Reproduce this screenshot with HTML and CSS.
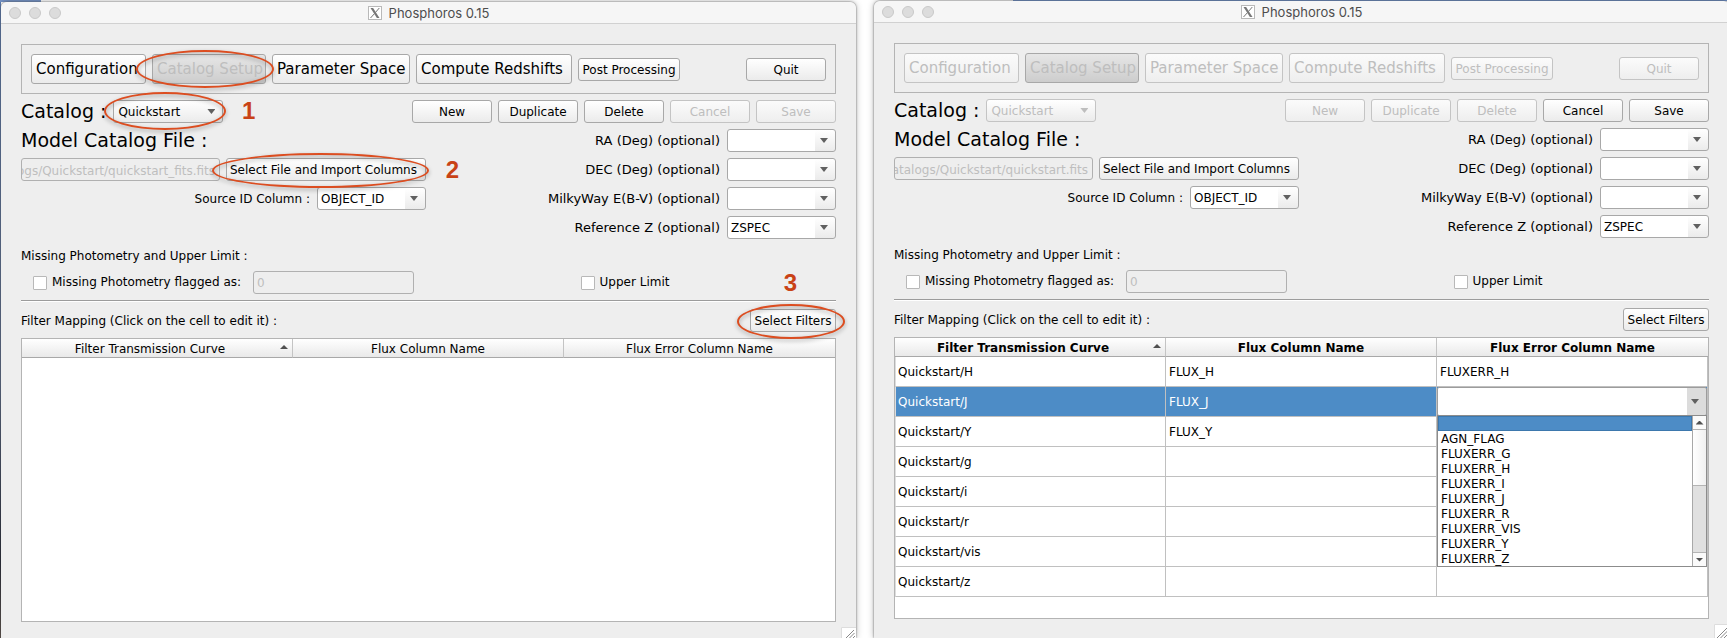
FILE: index.html
```html
<!DOCTYPE html>
<html lang="en">
<head>
<meta charset="utf-8">
<title>Phosphoros 0.15</title>
<link rel="stylesheet" href="styles.css">
</head>
<body>
<main class="desktop">

<section class="window window-main">
  <header class="titlebar">
    <div class="lights"><i></i><i></i><i></i></div>
    <h1 class="title">
      <svg class="xicon" viewBox="0 0 14 14" aria-hidden="true"><rect x=".5" y=".5" width="13" height="13" fill="#fff" stroke="#b9b9b9"/><path d="M2.5 2h2.6l6.4 10H8.9z" fill="#777"/><path d="M11.3 2L7.5 6.4M6.3 7.8L2.5 12" stroke="#777" stroke-width="1"/></svg>
      Phosphoros 0.15
    </h1>
    <span></span>
  </header>
  <div class="content">
    <nav class="toolbar">
      <button class="btn big w-conf">Configuration</button>
      <span class="marked"><button class="btn big pressed w-cat" disabled>Catalog Setup</button><span class="ring ring-setup"></span></span>
      <button class="btn big w-par">Parameter Space</button>
      <button class="btn big w-comp">Compute Redshifts</button>
      <button class="btn w-post">Post Processing</button>
      <button class="btn push">Quit</button>
    </nav>
    <div class="row">
      <label class="heading" for="cat-a">Catalog :</label>
      <span class="marked combo flat w-sel"><select id="cat-a"><option>Quickstart</option></select><span class="ring ring-catalog"></span><b class="num num-1">1</b></span>
      <button class="btn push">New</button>
      <button class="btn">Duplicate</button>
      <button class="btn">Delete</button>
      <button class="btn" disabled>Cancel</button>
      <button class="btn" disabled>Save</button>
    </div>
    <div class="form">
      <div class="source">
        <label class="heading" for="file-a">Model Catalog File :</label>
        <div class="row">
          <input class="field path" id="file-a" value="Catalogs/Quickstart/quickstart_fits.fits" disabled>
          <span class="marked"><button class="btn w-import">Select File and Import Columns</button><span class="ring ring-import"></span><b class="num num-2">2</b></span>
        </div>
        <div class="row end"><label for="sid-a">Source ID Column :</label><span class="combo"><select id="sid-a"><option>OBJECT_ID</option></select></span></div>
      </div>
      <div class="optional">
        <label for="ra-a">RA (Deg) (optional)</label><span class="combo"><select id="ra-a"><option></option></select></span>
        <label for="dec-a">DEC (Deg) (optional)</label><span class="combo"><select id="dec-a"><option></option></select></span>
        <label for="mw-a">MilkyWay E(B-V) (optional)</label><span class="combo"><select id="mw-a"><option></option></select></span>
        <label for="z-a">Reference Z (optional)</label><span class="combo"><select id="z-a"><option>ZSPEC</option></select></span>
      </div>
    </div>
    <p class="caption">Missing Photometry and Upper Limit :</p>
    <div class="limits">
      <div class="flagged"><label class="check"><input type="checkbox">Missing Photometry flagged as:</label><input class="field flag" aria-label="Missing photometry flag" value="0" disabled></div>
      <label class="check"><input type="checkbox">Upper Limit</label>
    </div>
    <hr>
    <div class="mapping">
      <span>Filter Mapping (Click on the cell to edit it) :</span>
      <span class="marked"><button class="btn w-filt">Select Filters</button><span class="ring ring-filters"></span><b class="num num-3">3</b></span>
    </div>
    <div class="tablebox">
      <table class="plain">
        <thead><tr><th class="sorted">Filter Transmission Curve</th><th>Flux Column Name</th><th>Flux Error Column Name</th></tr></thead>
      </table>
    </div>
  </div>
  <svg class="grip" viewBox="0 0 15 11" aria-hidden="true"><path d="M0 11V.5H15V11z" fill="#fff"/><path d="M.5 11V.5H15" fill="none" stroke="#ddd"/><path d="M5 11l8-8M8.500 11l5-5M12 11l2-2" stroke="#888" fill="none"/></svg>
</section>

<section class="window window-edit">
  <header class="titlebar">
    <div class="lights"><i></i><i></i><i></i></div>
    <h1 class="title">
      <svg class="xicon" viewBox="0 0 14 14" aria-hidden="true"><rect x=".5" y=".5" width="13" height="13" fill="#fff" stroke="#b9b9b9"/><path d="M2.5 2h2.6l6.4 10H8.9z" fill="#777"/><path d="M11.3 2L7.5 6.4M6.3 7.8L2.5 12" stroke="#777" stroke-width="1"/></svg>
      Phosphoros 0.15
    </h1>
    <span></span>
  </header>
  <div class="content">
    <nav class="toolbar">
      <button class="btn big w-conf" disabled>Configuration</button>
      <button class="btn big pressed w-cat" disabled>Catalog Setup</button>
      <button class="btn big w-par" disabled>Parameter Space</button>
      <button class="btn big w-comp" disabled>Compute Redshifts</button>
      <button class="btn w-post" disabled>Post Processing</button>
      <button class="btn push" disabled>Quit</button>
    </nav>
    <div class="row">
      <label class="heading" for="cat-b">Catalog :</label>
      <span class="combo flat off w-sel"><select id="cat-b" disabled><option>Quickstart</option></select></span>
      <button class="btn push" disabled>New</button>
      <button class="btn" disabled>Duplicate</button>
      <button class="btn" disabled>Delete</button>
      <button class="btn">Cancel</button>
      <button class="btn">Save</button>
    </div>
    <div class="form">
      <div class="source">
        <label class="heading" for="file-b">Model Catalog File :</label>
        <div class="row">
          <input class="field path" id="file-b" value="Catalogs/Quickstart/quickstart.fits" disabled>
          <button class="btn w-import">Select File and Import Columns</button>
        </div>
        <div class="row end"><label for="sid-b">Source ID Column :</label><span class="combo"><select id="sid-b"><option>OBJECT_ID</option></select></span></div>
      </div>
      <div class="optional">
        <label for="ra-b">RA (Deg) (optional)</label><span class="combo"><select id="ra-b"><option></option></select></span>
        <label for="dec-b">DEC (Deg) (optional)</label><span class="combo"><select id="dec-b"><option></option></select></span>
        <label for="mw-b">MilkyWay E(B-V) (optional)</label><span class="combo"><select id="mw-b"><option></option></select></span>
        <label for="z-b">Reference Z (optional)</label><span class="combo"><select id="z-b"><option>ZSPEC</option></select></span>
      </div>
    </div>
    <p class="caption">Missing Photometry and Upper Limit :</p>
    <div class="limits">
      <div class="flagged"><label class="check"><input type="checkbox">Missing Photometry flagged as:</label><input class="field flag" aria-label="Missing photometry flag" value="0" disabled></div>
      <label class="check"><input type="checkbox">Upper Limit</label>
    </div>
    <hr>
    <div class="mapping">
      <span>Filter Mapping (Click on the cell to edit it) :</span>
      <button class="btn w-filt">Select Filters</button>
    </div>
    <div class="tablebox">
      <table>
        <thead><tr><th class="sorted">Filter Transmission Curve</th><th>Flux Column Name</th><th>Flux Error Column Name</th></tr></thead>
        <tbody>
          <tr><td>Quickstart/H</td><td>FLUX_H</td><td>FLUXERR_H</td></tr>
          <tr class="selected"><td>Quickstart/J</td><td>FLUX_J</td><td class="editor">
            <div class="cellcombo">
              <select aria-label="Flux error column"><option></option></select>
              <div class="popup">
                <ul role="listbox" aria-label="Flux error columns">
                  <li role="option" aria-selected="true"></li>
                  <li role="option">AGN_FLAG</li>
                  <li role="option">FLUXERR_G</li>
                  <li role="option">FLUXERR_H</li>
                  <li role="option">FLUXERR_I</li>
                  <li role="option">FLUXERR_J</li>
                  <li role="option">FLUXERR_R</li>
                  <li role="option">FLUXERR_VIS</li>
                  <li role="option">FLUXERR_Y</li>
                  <li role="option">FLUXERR_Z</li>
                </ul>
                <div class="scroll"><span class="step up"></span><span class="thumb"></span><span class="step down"></span></div>
              </div>
            </div>
          </td></tr>
          <tr><td>Quickstart/Y</td><td>FLUX_Y</td><td></td></tr>
          <tr><td>Quickstart/g</td><td></td><td></td></tr>
          <tr><td>Quickstart/i</td><td></td><td></td></tr>
          <tr><td>Quickstart/r</td><td></td><td></td></tr>
          <tr><td>Quickstart/vis</td><td></td><td></td></tr>
          <tr><td>Quickstart/z</td><td></td><td></td></tr>
        </tbody>
      </table>
    </div>
  </div>
  <svg class="grip" viewBox="0 0 15 14" aria-hidden="true"><path d="M0 14V.5H15V14z" fill="#fff"/><path d="M.5 14V.5H15" fill="none" stroke="#ddd"/><path d="M3 14L13 4M6.500 14l7-7M10 14l4-4" stroke="#888" fill="none"/></svg>
</section>

</main>
</body>
</html>
```
FILE: styles.css
```css
* { box-sizing: border-box; }

html { overflow: hidden; }

body {
  margin: 0;
  font: 12px/15px "DejaVu Sans", sans-serif;
  color: #000;
  background: #fff;
}

.desktop {
  display: grid;
  grid-template-columns: 1fr 1fr;
  gap: 18px;
  min-height: 100vh;
  margin-right: -2px;
  padding-left: 1px;
  background:
    linear-gradient(#7593c6, #7593c6) 0 0 / 41px 2px no-repeat,
    linear-gradient(#6c8fca, #6c8fca) 1013px 0 / 100% 1px no-repeat,
    linear-gradient(#5b7db5, #5a6b8c 60%, #1c2030 88%, #5b5048) 0 0 / 1px 100% no-repeat,
    #fff;
}

.window {
  position: relative;
  display: flex;
  flex-direction: column;
  background: #eee;
  border-radius: 6px 6px 0 0;
  box-shadow: 0 0 2px #555, 0 0 7px rgba(0, 0, 0, .28);
}
.window-main { margin-top: 2px; }
.window-edit { margin-top: 1px; }

.titlebar {
  display: grid;
  grid-template-columns: 1fr auto 1fr;
  align-items: center;
  height: 22px;
  background: #f6f6f6;
  border-bottom: 1px solid #d1d1d1;
  border-radius: 6px 6px 0 0;
}
.lights { display: flex; gap: 8px; padding-left: 8px; }
.lights i {
  width: 12px;
  height: 12px;
  border: 1px solid #c9c9c9;
  border-radius: 50%;
  background: #dcdcdc;
}
.title {
  display: flex;
  align-items: center;
  gap: 7px;
  margin: 0;
  font: 13px/16px Inter, sans-serif;
  color: #4d4d4d;
}
.xicon { width: 14px; height: 14px; }

.content {
  display: flex;
  flex: 1;
  flex-direction: column;
  padding: 20px 20px 16px;
}
.window-edit .content { padding-bottom: 19px; }

.toolbar {
  display: flex;
  align-items: center;
  gap: 6px;
  margin-bottom: 6px;
  padding: 9px;
  border: 1px solid #b4b4b4;
}

.btn {
  width: 80px;
  height: 23px;
  padding: 2px 0 0;
  border: 1px solid #a8a8a8;
  border-radius: 3px;
  background: linear-gradient(#fff, #ebebeb);
  color: #000;
  font: inherit;
  white-space: nowrap;
}
.btn:disabled { color: #bebebe; border-color: #c4c4c4; background: linear-gradient(#fbfbfb, #eee); }
.btn.big { height: 30px; padding: 0 0 0 4px; font-size: 15px; text-align: left; }
.btn.pressed { border-color: #a8a8a8; background: linear-gradient(#e6e6e6, #cdcdcd); }
.w-conf { width: 115px; }
.w-cat { width: 114px; }
.w-par { width: 138px; }
.w-comp { width: 156px; }
.btn.w-post { width: 102px; }
.btn.w-import { width: 200px; padding-left: 3px; text-align: left; }
.btn.w-filt { width: 86px; }
.push { margin-left: auto; }

.row { display: flex; align-items: center; gap: 6px; height: 23px; }
.row.end { justify-content: flex-end; }
.row.end label { margin-right: 1px; padding-top: 2px; }
.heading { font-size: 19px; line-height: 23px; white-space: nowrap; }
.row .heading { margin-right: 1px; }

.combo { position: relative; width: 109px; height: 23px; }
.combo.w-sel { width: 110px; }
.combo select, .cellcombo select {
  appearance: none;
  width: 100%;
  height: 100%;
  padding: 2px 24px 0 3px;
  border: 1px solid #a8a8a8;
  border-radius: 3px;
  background: linear-gradient(#fff, #ebebeb) right / 20px 100% no-repeat, #fff;
  color: #000;
  font: inherit;
  opacity: 1;
}
.combo.flat select { padding-left: 4px; background: linear-gradient(#fff, #ebebeb); }
.combo.off select { color: #bebebe; border-color: #c4c4c4; }
.combo::after, .cellcombo::after {
  content: "";
  position: absolute;
  top: 9px;
  right: 8px;
  width: 8px;
  height: 5px;
  background: #606060;
  clip-path: polygon(0 0, 100% 0, 50% 100%);
  pointer-events: none;
}
.combo.off::after { background: #bebebe; }

.form { display: flex; justify-content: space-between; margin-top: 6px; }
.source { display: flex; flex-direction: column; gap: 6px; width: 405px; }
.optional {
  display: grid;
  grid-template-columns: auto 109px;
  gap: 6px 7px;
  align-items: center;
  text-align: right;
}
.optional label { font-size: 13px; }

.field {
  height: 23px;
  border: 1px solid #b0b0b0;
  border-radius: 3px;
  background: #eee;
  color: #bebebe;
  font: inherit;
}
.path { width: 199px; padding: 2px 4px 0 0; direction: rtl; }
.flag { width: 161px; padding: 1px 3px 0; }

.caption { margin: 10px 0 7px; }
.limits { display: flex; justify-content: space-between; align-items: center; padding-left: 12px; }
.limits::after { content: ""; }
.flagged { display: flex; align-items: center; gap: 12px; }
.check { display: flex; align-items: center; gap: 5px; }
.check input {
  appearance: none;
  width: 14px;
  height: 14px;
  margin: 0;
  border: 1px solid #b8b8b8;
  border-radius: 1px;
  background: #fff;
}
hr {
  width: 100%;
  margin: 6px 0 7px;
  border: 0;
  border-top: 1px solid #9c9c9c;
  border-bottom: 1px solid #fff;
}
.mapping { display: flex; justify-content: space-between; align-items: center; margin-bottom: 6px; }
.mapping > span:first-child { padding-top: 2px; }

.tablebox { flex: 1; border: 1px solid #b4b4b4; background: #fff; }
table { width: 100%; border-collapse: separate; border-spacing: 0; table-layout: fixed; }
th {
  position: relative;
  height: 19px;
  padding: 2px 0 0;
  border-right: 1px solid #c4c4c4;
  border-bottom: 1px solid #a8a8a8;
  background: linear-gradient(#fff, #e9e9e9);
  text-align: center;
}
th:last-child { border-right: 0; }
.plain th { font-weight: normal; }
th.sorted { padding-right: 14px; }
th.sorted::after {
  content: "";
  position: absolute;
  top: 6px;
  right: 4px;
  width: 8px;
  height: 4px;
  background: #505050;
  clip-path: polygon(50% 0, 100% 100%, 0 100%);
}
td {
  height: 30px;
  padding: 2px 3px 0;
  border-right: 1px solid #c0c0c0;
  border-bottom: 1px solid #c0c0c0;
}
td:first-child { padding-left: 2px; border-left: 1px solid #ddd; }
.selected td { background: #4d8cc6; color: #fff; }
td.editor { padding: 0; }

.cellcombo { position: relative; height: 29px; }
.cellcombo select {
  display: block;
  border-color: #9c9c9c;
  border-radius: 2px;
  background: linear-gradient(#dcdcdc, #dcdcdc) right / 19px 100% no-repeat, #fff;
}
.cellcombo::after { top: 12px; }
.popup {
  position: absolute;
  z-index: 2;
  top: 28px;
  left: 0;
  right: 0;
  display: flex;
  border: 1px solid #8c8c8c;
  background: #fff;
  color: #000;
}
.popup ul { flex: 1; margin: 0; padding: 0; list-style: none; }
.popup li { height: 15px; padding-left: 3px; line-height: 17px; }
.popup li[aria-selected="true"] { background: #4d8cc6; border: 1px solid #3d78ad; }
.scroll { display: flex; flex-direction: column; width: 14px; border-left: 1px solid #a8a8a8; background: #e0e0e0; }
.step { display: grid; place-items: center; height: 14px; background: #fafafa; }
.step::before { content: ""; width: 8px; height: 4px; background: #505050; clip-path: polygon(50% 0, 100% 100%, 0 100%); }
.step.up { border-bottom: 1px solid #b4b4b4; }
.step.down { margin-top: auto; border-top: 1px solid #b4b4b4; }
.step.down::before { clip-path: polygon(0 0, 100% 0, 50% 100%); }
.thumb { height: 56px; background: linear-gradient(90deg, #fff, #f0f0f0); border-bottom: 1px solid #b4b4b4; }

.grip { position: absolute; right: 0; bottom: 0; width: 15px; height: 11px; }
.window-edit .grip { height: 14px; }

/* Tutorial annotations */
.marked { position: relative; display: inline-flex; }
.ring {
  position: absolute;
  z-index: 1;
  border: 2px solid #dc4d20;
  border-radius: 50%;
  filter: drop-shadow(0 2px 2px rgba(0, 0, 0, .35));
  pointer-events: none;
}
.ring-setup { inset: -4px -8px -4px -16px; }
.ring-catalog { inset: -8px -3px -7px -9px; }
.ring-import { inset: -5px -3px -7px -14px; }
.ring-filters { inset: -5px -9px -7px -13px; }
.num {
  position: absolute;
  font: bold 24px/24px "Liberation Sans", sans-serif;
  color: #c94216;
}
.num-1 { top: -1px; right: -32px; }
.num-2 { top: 0; right: -33px; }
.num-3 { top: -38px; right: 39px; }
```
